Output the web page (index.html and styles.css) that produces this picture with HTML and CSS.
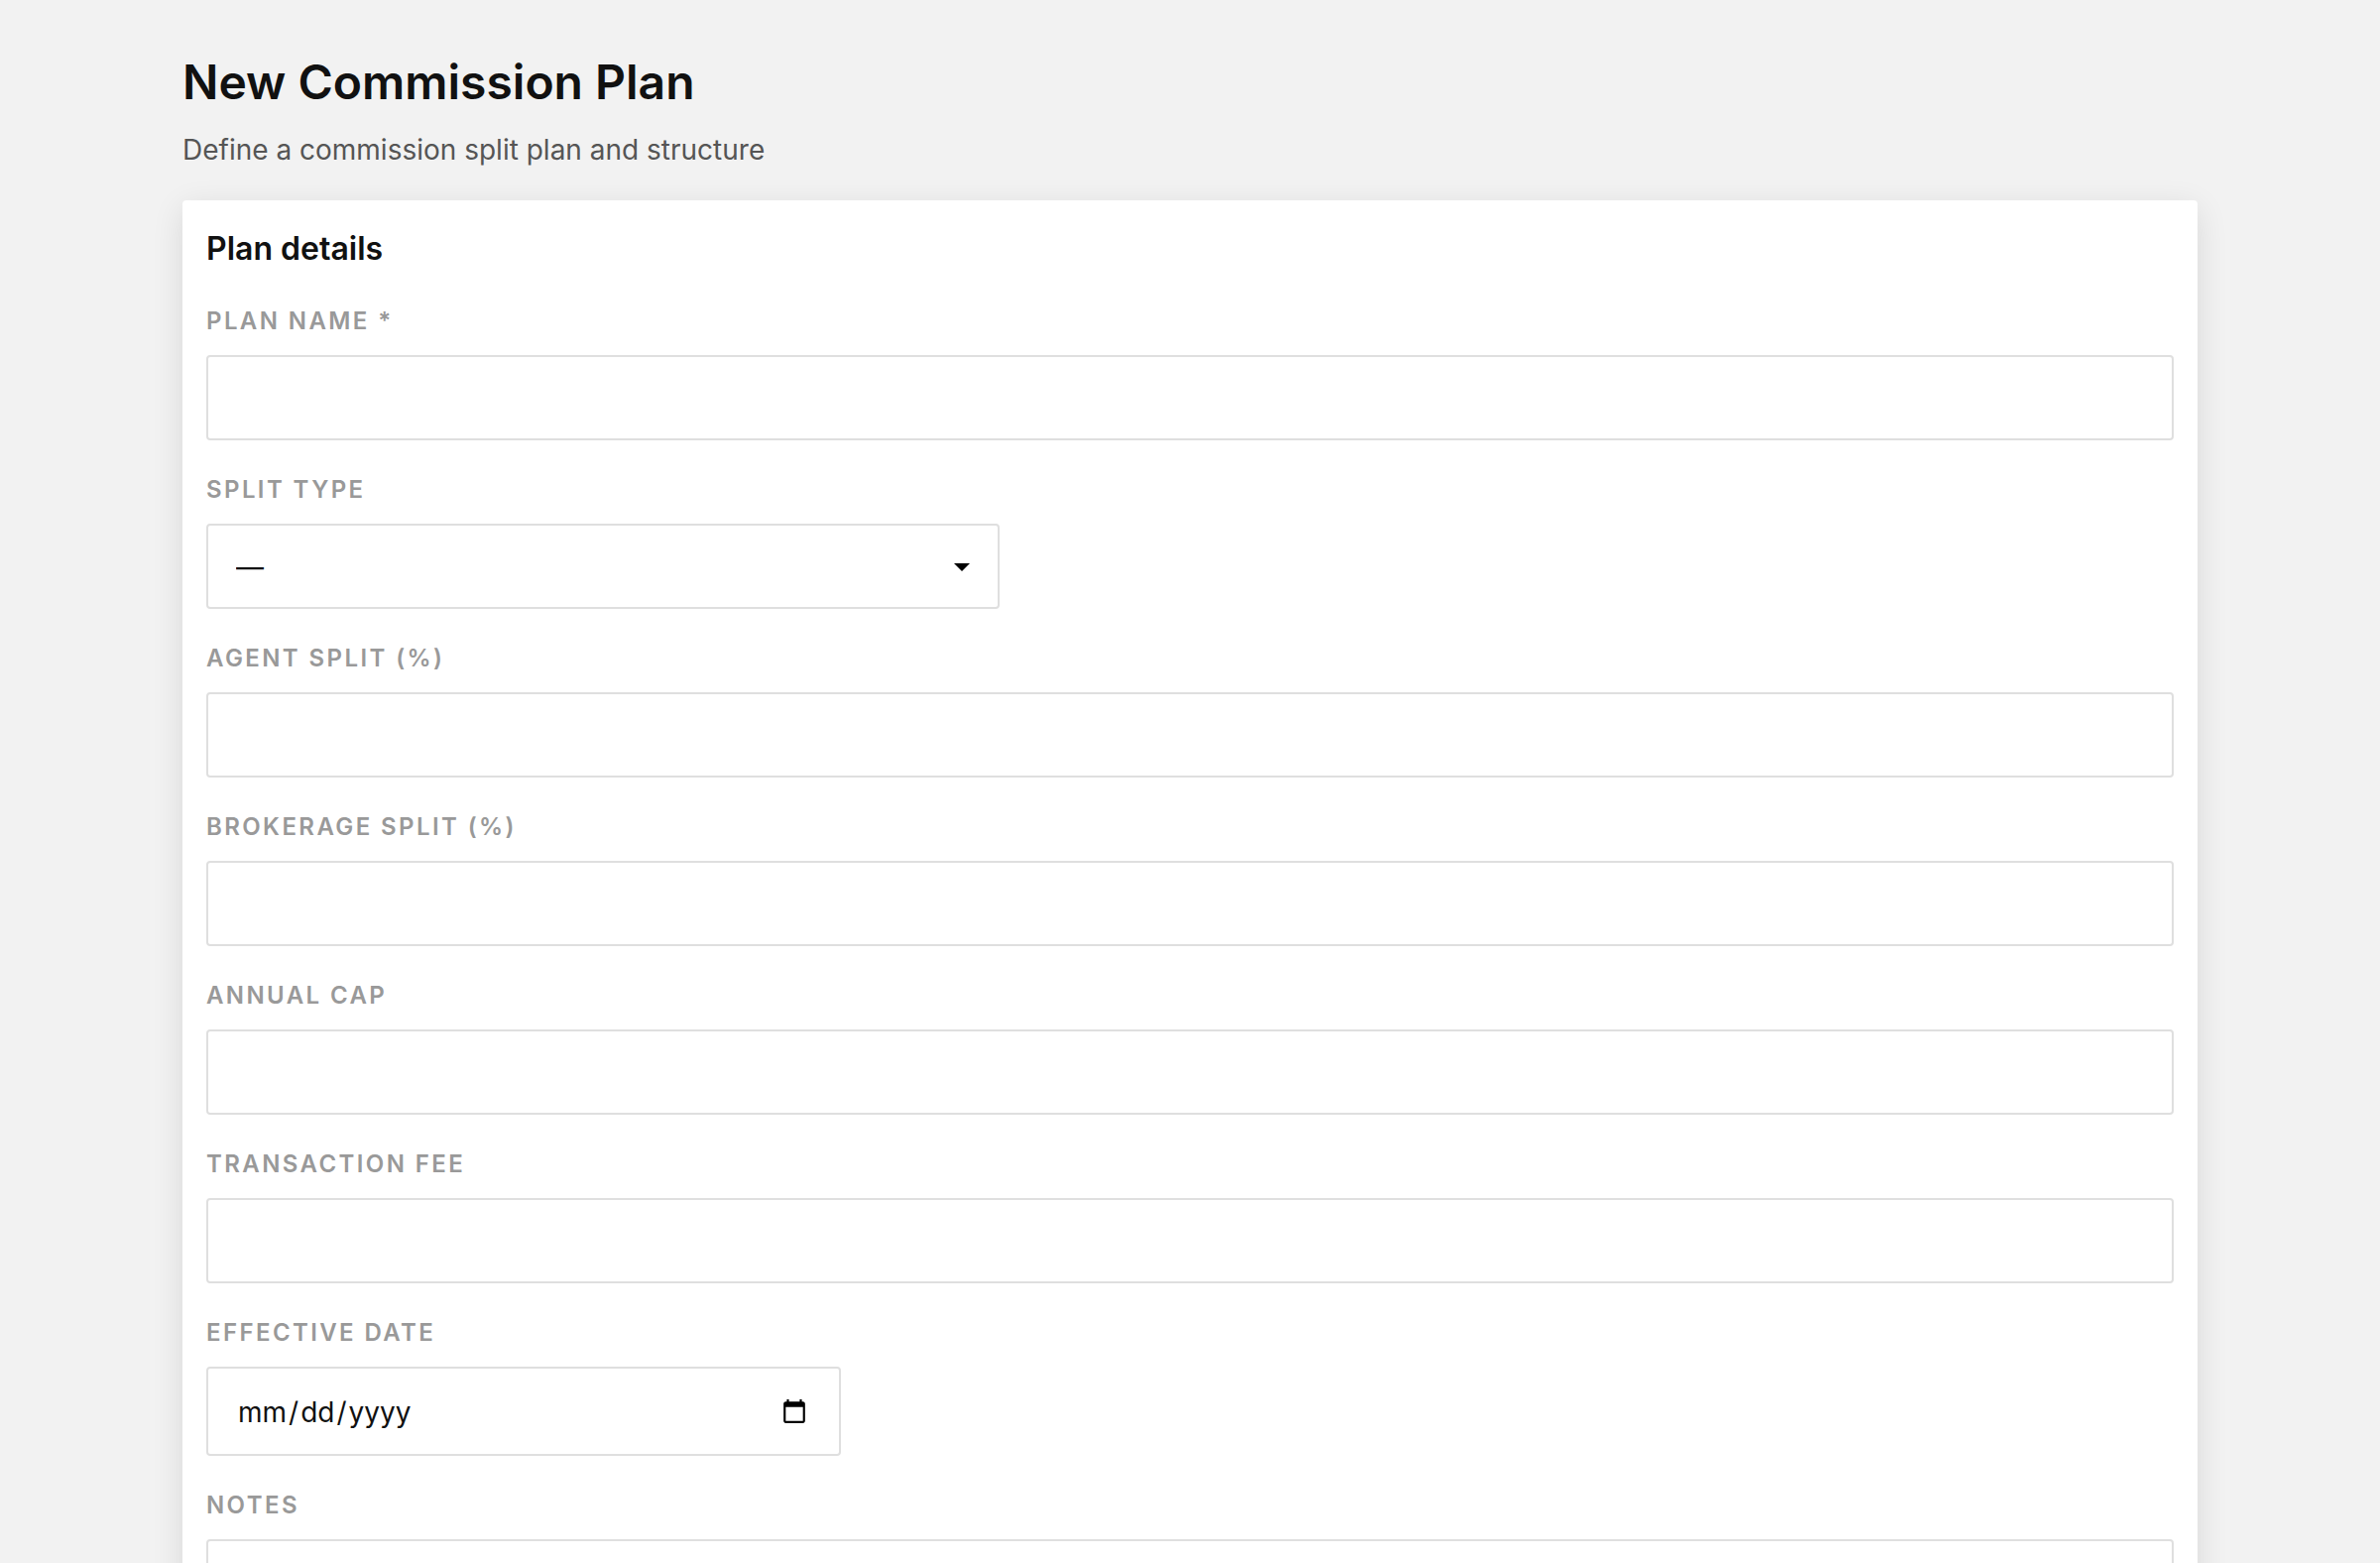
FILE: index.html
```html
<!DOCTYPE html>
<html lang="en">
<head>
<meta charset="utf-8">
<meta name="viewport" content="width=device-width, initial-scale=1">
<title>New Commission Plan</title>
<link rel="stylesheet" href="styles.css">
</head>
<body>
<main class="page">
  <header class="page-header">
    <h1 class="page-title">New Commission Plan</h1>
    <p class="page-subtitle">Define a commission split plan and structure</p>
  </header>
  <form class="card">
    <h2 class="card-title">Plan details</h2>
    <div class="field">
      <label class="label" for="plan-name">Plan name *</label>
      <input class="control" id="plan-name" type="text" required>
    </div>
    <div class="field">
      <label class="label" for="split-type">Split type</label>
      <div class="select-wrap">
        <select class="control select" id="split-type">
          <option>—</option>
        </select>
        <svg class="caret" viewBox="0 0 16 8" aria-hidden="true"><path d="M0 0h16L8 8z"/></svg>
      </div>
    </div>
    <div class="field">
      <label class="label" for="agent-split">Agent split (%)</label>
      <input class="control" id="agent-split" type="text" inputmode="decimal">
    </div>
    <div class="field">
      <label class="label" for="brokerage-split">Brokerage split (%)</label>
      <input class="control" id="brokerage-split" type="text" inputmode="decimal">
    </div>
    <div class="field">
      <label class="label" for="annual-cap">Annual cap</label>
      <input class="control" id="annual-cap" type="text" inputmode="decimal">
    </div>
    <div class="field">
      <label class="label" for="transaction-fee">Transaction fee</label>
      <input class="control" id="transaction-fee" type="text" inputmode="decimal">
    </div>
    <div class="field">
      <label class="label" for="effective-date">Effective date</label>
      <input class="control date" id="effective-date" type="date">
    </div>
    <div class="field">
      <label class="label" for="notes">Notes</label>
      <textarea class="control notes" id="notes"></textarea>
    </div>
  </form>
</main>
</body>
</html>
```
FILE: styles.css
```css
*,
*::before,
*::after {
  box-sizing: border-box;
}

html {
  scrollbar-width: none;
}

body {
  margin: 0;
  background: #f2f2f2;
  color: #111;
  font-family: Inter, "Liberation Sans", sans-serif;
  font-size: 28px;
}

.page {
  max-width: 2128px;
  margin: 0 auto;
  padding: 48px;
}

.page-header {
  display: flex;
  flex-direction: column;
  gap: 12px;
  margin-bottom: 30px;
}

.page-title {
  margin: 0;
  font-size: 48px;
  font-weight: 600;
  line-height: 70px;
}

.page-subtitle {
  margin: 0;
  color: #555;
  line-height: 42px;
}

.card {
  display: flex;
  flex-direction: column;
  gap: 32px;
  padding: 26px 24px 24px;
  border-radius: 4px;
  background: #fff;
  box-shadow: 0 8px 32px rgba(0, 0, 0, 0.11);
}

.card-title {
  margin: 0;
  font-size: 32px;
  font-weight: 600;
  line-height: 46px;
}

.field {
  display: flex;
  flex-direction: column;
  gap: 16px;
}

.label {
  color: #999;
  font-size: 24px;
  font-weight: 600;
  letter-spacing: 0.1em;
  line-height: 36px;
  text-transform: uppercase;
}

.control {
  width: 100%;
  height: 86px;
  margin: 0;
  padding: 0 28px;
  border: 2px solid #dfdfdf;
  border-radius: 4px;
  outline: 0;
  background: #fff;
  color: #111;
  font: inherit;
}

.select-wrap {
  position: relative;
  width: 100%;
  max-width: 800px;
}

.select {
  display: block;
  padding-top: 2px;
  appearance: none;
}

.caret {
  position: absolute;
  top: 40px;
  right: 30px;
  width: 16px;
  height: 8px;
  pointer-events: none;
}

.date {
  max-width: 640px;
  height: 90px;
}

.date::-webkit-datetime-edit-fields-wrapper {
  padding: 2px 0 0;
}

.date::-webkit-datetime-edit-month-field,
.date::-webkit-datetime-edit-day-field,
.date::-webkit-datetime-edit-year-field {
  padding: 0 2px;
}

.date::-webkit-calendar-picker-indicator {
  box-sizing: content-box;
  width: 26px;
  height: 26px;
  padding: 4px;
  background-size: 26px 26px;
}

.notes {
  display: block;
  height: 192px;
  padding: 24px 28px;
  resize: vertical;
}
```
